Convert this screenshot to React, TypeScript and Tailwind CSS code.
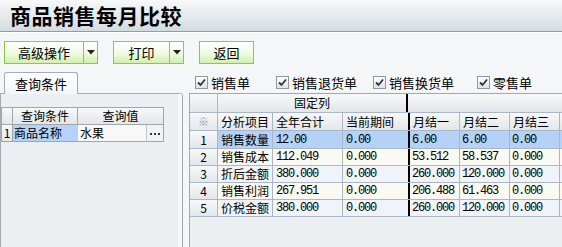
import React from "react";

const cjk = "font-['Noto_Sans_CJK_SC','Noto_Sans',sans-serif]";
const mono = "font-['Liberation_Mono','DejaVu_Sans_Mono',monospace] text-[12px] tracking-[-1.2px]";

const rows = [
  { n: "1", name: "销售数量", vals: ["12.00", "0.00", "6.00", "6.00", "0.00"] },
  { n: "2", name: "销售成本", vals: ["112.049", "0.000", "53.512", "58.537", "0.000"] },
  { n: "3", name: "折后金额", vals: ["380.000", "0.000", "260.000", "120.000", "0.000"] },
  { n: "4", name: "销售利润", vals: ["267.951", "0.000", "206.488", "61.463", "0.000"] },
  { n: "5", name: "价税金额", vals: ["380.000", "0.000", "260.000", "120.000", "0.000"] },
];

function Arrow() {
  return (
    <svg width="8" height="5" viewBox="0 0 8 5">
      <polygon points="0,0 8,0 4,4.5" fill="#222" />
    </svg>
  );
}

function GreenButton({ label, width, split }: { label: string; width: string; split?: boolean }) {
  return (
    <div
      className={`${width} h-[23px] flex border border-[#86cd45] bg-gradient-to-b from-[#ffffff] via-[#f2fbe6] to-[#d2f0ab] shadow-[inset_0_1px_0_#fff]`}
    >
      <div className="flex-1 flex items-center justify-center text-[13px] text-black">{label}</div>
      {split && (
        <div className="w-[14px] border-l border-[#86cd45] flex items-center justify-center">
          <Arrow />
        </div>
      )}
    </div>
  );
}

function Check({ label, width }: { label: string; width: string }) {
  return (
    <div className={`${width} flex items-center gap-[3px]`}>
      <div className="w-[13px] h-[13px] border border-[#8c98a4] bg-gradient-to-b from-[#ffffff] to-[#dfe3e7] flex items-center justify-center">
        <svg width="9" height="9" viewBox="0 0 9 9">
          <path d="M1 4.5 L3.5 7 L8 1.5" stroke="#333" strokeWidth="1.8" fill="none" />
        </svg>
      </div>
      <span className="text-[13px] leading-none text-black">{label}</span>
    </div>
  );
}

const hdr = "bg-gradient-to-b from-[#f7f8f9] to-[#e3e7ea]";
const line = "border-[#a9b7c6]";
const cols = ["w-[55px]", "w-[70px]", "w-[67px]", "w-[50px]", "w-[50px]", "w-[50px]"];

export default function App() {
  return (
    <div className={`w-[562px] h-[247px] overflow-hidden bg-[#f4f6f8] ${cjk} text-black`}>
      <div className="h-[32px] border-b border-[#8d9dab] bg-gradient-to-b from-[#f7f8f9] to-[#d4dce1] flex items-center pl-[10px]">
        <span className="text-[21px] font-bold leading-none tracking-[0.5px]">商品销售每月比较</span>
      </div>
      <div className="h-px bg-white" />

      <div className="mt-[8px] flex pl-[4px] gap-[15px]">
        <GreenButton label="高级操作" width="w-[94px]" split />
        <GreenButton label="打印" width="w-[71px]" split />
        <GreenButton label="返回" width="w-[55px]" />
      </div>

      <div className="mt-[8px] flex">
        {/* left query panel */}
        <div className="w-[183px] flex flex-col">
          <div className="ml-[4px] w-[74px] h-[22px] -mb-px relative z-10 border border-b-0 border-[#a4abb2] rounded-t-[3px] bg-gradient-to-b from-[#ffffff] to-[#f3f5f6] flex items-center justify-center text-[13px]">
            查询条件
          </div>
          <div className="h-[155px] flex border-l border-t border-r border-[#a4abb2] rounded-tr-[3px]">
            <div className="flex-1 bg-[#eceff1] pt-[13px]">
              <div className="w-[163px] border border-[#a2a6aa] text-[12px] leading-none">
                <div className={`flex h-[17px] border-b border-[#a2a6aa] ${hdr}`}>
                  <div className="w-[11px] border-r border-[#a2a6aa]" />
                  <div className="w-[65px] border-r border-[#a2a6aa] flex items-center justify-center">查询条件</div>
                  <div className="flex-1 flex items-center justify-center">查询值</div>
                </div>
                <div className="flex h-[16px]">
                  <div className={`w-[11px] border-r border-[#a2a6aa] ${hdr} flex items-center justify-center`}>1</div>
                  <div className="w-[65px] border-r border-[#c9ced3] bg-[#b5d2f8] flex items-center pl-[1px]">商品名称</div>
                  <div className="flex-1 bg-[#f8f8f8] flex items-center pl-[2px]">水果</div>
                  <div className="w-[17px] border-l border-[#c4c8cc] bg-[#f1f2f3] flex items-center justify-center gap-[2px] pt-[2px]">
                    <span className="w-[2px] h-[2px] bg-[#333]" />
                    <span className="w-[2px] h-[2px] bg-[#333]" />
                    <span className="w-[2px] h-[2px] bg-[#333]" />
                  </div>
                </div>
              </div>
            </div>
            <div className="w-[4px] bg-[#f6f7f9]" />
          </div>
        </div>

        {/* right */}
        <div className="ml-[6px] flex-1 flex flex-col">
          <div className="h-[21px] flex items-center pl-[6px]">
            <Check label="销售单" width="w-[81px]" />
            <Check label="销售退货单" width="w-[97px]" />
            <Check label="销售换货单" width="w-[104px]" />
            <Check label="零售单" width="w-[80px]" />
          </div>
          <div className={`h-[154px] border-l border-t border-[#9ba8b5] bg-[#eceff1] text-[12px] leading-none`}>
            <div className={`flex h-[19px] border-b ${line} ${hdr}`}>
              <div className={`w-[28px] border-r ${line}`} />
              <div className="w-[190px] border-r-2 border-black flex items-center justify-center">固定列</div>
              <div className="flex-1" />
            </div>
            <div className={`flex h-[18px] border-b ${line} ${hdr}`}>
              <div className={`w-[28px] border-r ${line} flex items-center justify-center text-[11px] text-[#9aa0a6]`}>※</div>
              {["分析项目", "全年合计", "当前期间", "月结一", "月结二", "月结三"].map((h, i) => (
                <div
                  key={h}
                  className={`${cols[i]} ${i === 2 ? "border-r-2 border-black" : `border-r ${line}`} flex items-center pl-[3px]`}
                >
                  {h}
                </div>
              ))}
              <div className="flex-1" />
            </div>
            {rows.map((r, ri) => {
              const bg = ri === 0 ? "bg-[#b4d1f8]" : ri % 2 === 1 ? "bg-[#fbfaf2]" : "bg-[#f0f4fa]";
              return (
                <div key={r.n} className={`flex ${ri === 0 ? "h-[18px]" : "h-[17px]"} border-b ${line}`}>
                  <div className={`w-[28px] border-r ${line} ${hdr} flex items-center justify-center`}>{r.n}</div>
                  <div className={`${cols[0]} border-r ${line} ${bg} flex items-center pl-[3px]`}>{r.name}</div>
                  {r.vals.map((v, i) => (
                    <div
                      key={i}
                      className={`${cols[i + 1]} ${i === 1 ? "border-r-2 border-black" : `border-r ${line}`} ${bg} ${mono} flex items-center ${i >= 2 ? "pl-[2px]" : "pl-[3px]"}`}
                    >
                      {v}
                    </div>
                  ))}
                  <div className={`flex-1 ${bg}`} />
                </div>
              );
            })}
          </div>
        </div>
      </div>
    </div>
  );
}
